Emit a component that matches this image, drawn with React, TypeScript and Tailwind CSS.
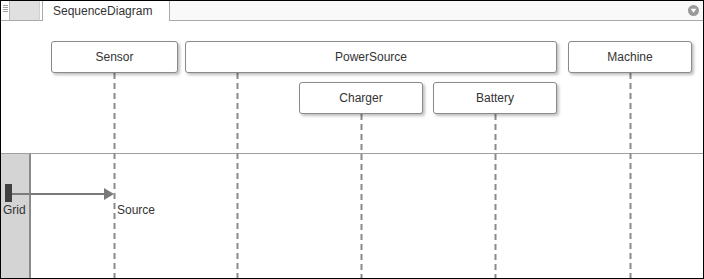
import React from "react";

const nodes = [
	{ name: "Sensor", x: 50, y: 20, w: 127 },
	{ name: "PowerSource", x: 184, y: 20, w: 372 },
	{ name: "Machine", x: 567, y: 20, w: 124 },
	{ name: "Charger", x: 298, y: 61, w: 124 },
	{ name: "Battery", x: 432, y: 61, w: 124 },
];

// lifelines: x centre, y start (canvas coords)
const lifelines = [
	{ x: 113, y: 52 },
	{ x: 236, y: 52 },
	{ x: 360, y: 93 },
	{ x: 494, y: 93 },
	{ x: 629, y: 52 },
];

export default function App() {
	return (
		<div
			className="w-[704px] h-[279px] bg-white border border-black flex flex-col overflow-hidden"
			style={{ fontFamily: '"Liberation Sans", Arial, sans-serif' }}
		>
			{/* tab bar */}
			<div className="h-[20px] flex shrink-0">
				<div className="w-[8px] border-b border-[#a9a9a9] flex flex-col gap-[1px] pt-[4px] pl-[2px]">
					{[0, 1, 2, 3].map((k) => (
						<div key={k} className="w-[5px] h-[1px] bg-[#a0a0a0]" />
					))}
				</div>
				<div className="w-[30px] bg-[#e0e0e0] border-l border-[#b8b8b8] border-b border-b-[#a9a9a9]" />
				<div className="w-[3px] bg-white border-l border-[#d0d0d0] border-b border-b-[#a9a9a9]" />
				<div className="w-[128px] bg-white border-l border-r border-[#a9a9a9] flex items-center pl-[10px] text-[12px] text-[#333]">
					SequenceDiagram
				</div>
				<div className="flex-1 bg-[#f9f9f9] border-b border-[#a9a9a9] flex items-center justify-end pr-[4px]">
					<svg width="11" height="11" viewBox="0 0 10 10">
						<circle cx="5" cy="5" r="5" fill="#9a9a9a" />
						<path d="M2.5 3.5 L7.5 3.5 L5 7 Z" fill="#fff" />
					</svg>
				</div>
			</div>

			{/* canvas */}
			<div className="relative flex-1">
				<div className="h-[133px] border-b border-[#a0a0a0]" />
				<div className="absolute left-0 top-[133px] bottom-0 w-[30px] bg-[#d4d4d4] border-r-2 border-[#8a8a8a]" />

				<svg className="absolute inset-0" width="702" height="257">
					{lifelines.map((l, k) => (
						<line
							key={k}
							x1={l.x + 0.5}
							y1={l.y}
							x2={l.x + 0.5}
							y2={257}
							stroke="#8a8a8a"
							strokeWidth="2"
							strokeDasharray="6 4"
						/>
					))}
					<rect x="4" y="163" width="7" height="18" fill="#404040" />
					<line x1="11" y1="173" x2="104" y2="173" stroke="#7a7a7a" strokeWidth="2" />
					<path d="M103 167 L113 173 L103 179 Z" fill="#7a7a7a" />
				</svg>

				{nodes.map((n) => (
					<div
						key={n.name}
						className="absolute h-[32px] bg-white border border-[#8a8a8a] rounded-[3px] shadow-[2px_2px_3px_rgba(0,0,0,0.25)] flex items-center justify-center text-[12px] text-[#333]"
						style={{ left: n.x, top: n.y, width: n.w }}
					>
						{n.name}
					</div>
				))}

				<div className="absolute left-[2px] top-[180px] text-[12px] text-[#333]">Grid</div>
				<div className="absolute left-[116px] top-[180px] text-[12px] text-[#333]">Source</div>
			</div>
		</div>
	);
}
